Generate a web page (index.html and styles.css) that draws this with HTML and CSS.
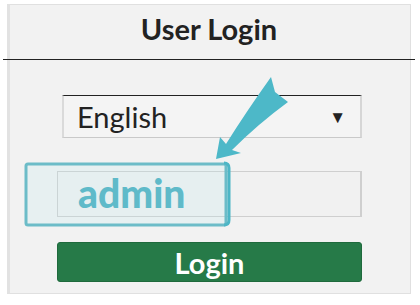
FILE: index.html
```html
<!DOCTYPE html>
<html lang="en">
<head>
    <meta charset="UTF-8">
    <meta name="viewport" content="width=device-width, initial-scale=1.0">
    <title>User Login</title>
    <link rel="stylesheet" href="styles.css">
</head>
<body>
    <div class="panel">
        <h1 class="panel-title">User Login</h1>

        <!-- login form -->
        <form class="login-form">
            <div class="lang-select">
                <span class="lang-value">English</span>
                <span class="lang-arrow">&#9660;</span>
            </div>
            <div class="user-field">admin</div>
            <button type="button" class="login-btn">Login</button>
        </form>
    </div>

    <!-- annotation: highlight + arrow -->
    <svg class="annotations" width="420" height="305" viewBox="0 0 420 305">
        <rect x="26" y="164" width="200" height="61" rx="2" fill="rgba(190, 232, 236, 0.22)" stroke="#6cbcc8" stroke-width="3"/>
        <path d="M224 163 Q229 163 229 168 L229 220 Q229 225 224 225" fill="none" stroke="#4db6c6" stroke-width="3"/>
        <path d="M216 159 L220 137 L226 144 Q246 112 271 77 L275 92 L288 102 Q258 124 232 150 L241 153 Z" fill="#4db8c8"/>
    </svg>
</body>
</html>
```

FILE: styles.css
```css
body {
    margin: 0;
    background-color: #fff;
    font-family: Lato, "Open Sans", sans-serif;
    color: #222;
}

.panel {
    width: 404px;
    height: 290px;
    margin: 4px 0 0 7px;
    background-color: #f2f2f2;
    border: 1px solid #e0e0e0;
    border-left: 3px solid #e2e2e2;
    box-sizing: border-box;
}

.panel-title {
    height: 55px;
    margin: 0 -5px 0 -7px;
    font-size: 29px;
    font-weight: 700;
    line-height: 48px;
    text-align: center;
    border-bottom: 1px solid #222;
    box-sizing: border-box;
}

.login-form {
    display: flex;
    flex-direction: column;
    width: 305px;
    margin: 35px 0 0 47px;
}

.lang-select {
    display: flex;
    align-items: center;
    justify-content: space-between;
    height: 43px;
    margin-left: 5px;
    padding: 0 14px 0 13px;
    background-color: #f4f4f4;
    border-top: 1px solid #222;
    border-bottom: 1px solid #c9c9c9;
    border-left: 2px solid #dadada;
    border-right: 2px solid #d6d6d6;
    box-sizing: border-box;
}

.lang-value {
    font-size: 29px;
}

.lang-arrow {
    font-size: 17px;
}

.user-field {
    height: 46px;
    margin-top: 33px;
    padding-left: 20px;
    font-size: 39px;
    font-weight: 900;
    line-height: 43px;
    color: #45adbf;
    background-color: #f1f1f1;
    border: 1px solid #cfcfcf;
    border-right-width: 2px;
    box-sizing: border-box;
}

.login-btn {
    height: 40px;
    margin-top: 25px;
    padding: 0;
    font-family: inherit;
    font-size: 29px;
    font-weight: 700;
    color: #fff;
    background-color: #267a48;
    border: 1px solid #1f6a3d;
    border-radius: 3px;
}

.annotations {
    position: absolute;
    top: 0;
    left: 0;
    pointer-events: none;
}
```
